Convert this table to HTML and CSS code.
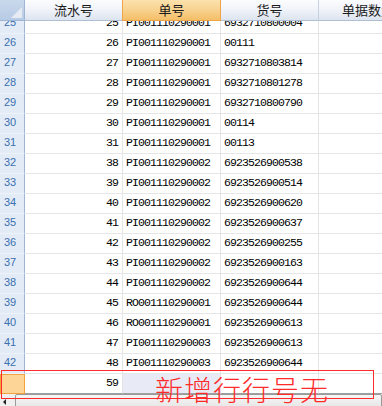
FILE: index.html
```html
<!DOCTYPE html>
<html>
<head>
<meta charset="utf-8">
<link rel="stylesheet" href="styles.css">
</head>
<body>
<div class="grid">
  <div class="row head">
    <div class="corner"><span class="tri"></span></div>
    <div class="hc">流水号</div>
    <div class="hc sel">单号</div>
    <div class="hc">货号</div>
    <div class="hc last">单据数量</div>
  </div>
  <div class="body">
    <div class="row first"><div class="rh">25</div><div class="c num">25</div><div class="c">PI001110290001</div><div class="c">6932710800004</div><div class="c"></div></div>
    <div class="row"><div class="rh">26</div><div class="c num">26</div><div class="c">PI001110290001</div><div class="c">00111</div><div class="c"></div></div>
    <div class="row"><div class="rh">27</div><div class="c num">27</div><div class="c">PI001110290001</div><div class="c">6932710803814</div><div class="c"></div></div>
    <div class="row"><div class="rh">28</div><div class="c num">28</div><div class="c">PI001110290001</div><div class="c">6932710801278</div><div class="c"></div></div>
    <div class="row"><div class="rh">29</div><div class="c num">29</div><div class="c">PI001110290001</div><div class="c">6932710800790</div><div class="c"></div></div>
    <div class="row"><div class="rh">30</div><div class="c num">30</div><div class="c">PI001110290001</div><div class="c">00114</div><div class="c"></div></div>
    <div class="row"><div class="rh">31</div><div class="c num">31</div><div class="c">PI001110290001</div><div class="c">00113</div><div class="c"></div></div>
    <div class="row"><div class="rh">32</div><div class="c num">38</div><div class="c">PI001110290002</div><div class="c">6923526900538</div><div class="c"></div></div>
    <div class="row"><div class="rh">33</div><div class="c num">39</div><div class="c">PI001110290002</div><div class="c">6923526900514</div><div class="c"></div></div>
    <div class="row"><div class="rh">34</div><div class="c num">40</div><div class="c">PI001110290002</div><div class="c">6923526900620</div><div class="c"></div></div>
    <div class="row"><div class="rh">35</div><div class="c num">41</div><div class="c">PI001110290002</div><div class="c">6923526900637</div><div class="c"></div></div>
    <div class="row"><div class="rh">36</div><div class="c num">42</div><div class="c">PI001110290002</div><div class="c">6923526900255</div><div class="c"></div></div>
    <div class="row"><div class="rh">37</div><div class="c num">43</div><div class="c">PI001110290002</div><div class="c">6923526900163</div><div class="c"></div></div>
    <div class="row"><div class="rh">38</div><div class="c num">44</div><div class="c">PI001110290002</div><div class="c">6923526900644</div><div class="c"></div></div>
    <div class="row"><div class="rh">39</div><div class="c num">45</div><div class="c">RO001110290001</div><div class="c">6923526900644</div><div class="c"></div></div>
    <div class="row"><div class="rh">40</div><div class="c num">46</div><div class="c">RO001110290001</div><div class="c">6923526900613</div><div class="c"></div></div>
    <div class="row"><div class="rh">41</div><div class="c num">47</div><div class="c">PI001110290003</div><div class="c">6923526900613</div><div class="c"></div></div>
    <div class="row"><div class="rh">42</div><div class="c num">48</div><div class="c">PI001110290003</div><div class="c">6923526900644</div><div class="c"></div></div>
  </div>
  <div class="row newrow"><div class="rh cur"></div><div class="c num">59</div><div class="c focus"></div><div class="c"></div><div class="c"></div></div>
  <div class="hscroll">
    <div class="arrow"></div>
    <div class="thumb"></div>
  </div>
  <div class="mark"></div>
  <div class="note">新增行行号无</div>
</div>
</body>
</html>
```

FILE: styles.css
```css
html, body {
  margin: 0;
  padding: 0;
  background: #ffffff;
}
.grid {
  position: relative;
  width: 382px;
  height: 406px;
  overflow: hidden;
  background: #ffffff;
}
.row {
  display: flex;
  height: 20px;
  width: 417px;
}
.row > div {
  flex: 0 0 98px;
  box-sizing: border-box;
}
.row > .rh,
.row > .corner {
  flex: 0 0 25px;
}
.head {
  height: 21px;
}
.corner {
  position: relative;
  background: linear-gradient(#c9d8ec, #b7cbe5);
  border-right: 1px solid #9eb6d4;
  border-bottom: 1px solid #9eb6d4;
}
.tri {
  position: absolute;
  right: 2px;
  bottom: 2px;
  width: 0;
  height: 0;
  border-left: 11px solid transparent;
  border-bottom: 11px solid #e6ebf3;
}
.hc {
  background: linear-gradient(#fbfcfe 0%, #f1f4f9 45%, #dde4ef 100%);
  border-right: 1px solid #c5d2e4;
  border-bottom: 1px solid #aebfd6;
  font-family: "Noto Sans CJK SC", sans-serif;
  font-size: 13px;
  line-height: 19px;
  color: #1a1a1a;
  text-align: center;
  white-space: nowrap;
}
.hc.last {
  text-align: left;
  padding-left: 23px;
  overflow: hidden;
}
.row > .hc.sel {
  background: linear-gradient(#fbe2ad 0%, #f8d28f 50%, #f4be67 100%);
  border-left: 1px solid #f0a448;
  border-right: 1px solid #f0a448;
  border-bottom: 1px solid #f0a448;
  margin-left: -1px;
  flex-basis: 99px;
}
.body {
  height: 353px;
  overflow: hidden;
}
.first {
  margin-top: -7px;
}
.rh {
  background: #e3ebf6;
  border-right: 1px solid #9eb6d4;
  border-bottom: 1px solid #eef3f9;
  font-family: "Liberation Sans", sans-serif;
  font-size: 11px;
  line-height: 17px;
  color: #3a70b0;
  padding-left: 4px;
}
.c {
  border-right: 1px solid #e4e4e4;
  border-bottom: 1px solid #e6e6e6;
  font-family: "Liberation Mono", monospace;
  font-size: 11.5px;
  letter-spacing: -0.9px;
  line-height: 17px;
  color: #000000;
  padding-left: 3px;
  white-space: nowrap;
  overflow: hidden;
}
.c.num {
  text-align: right;
  padding-left: 0;
  padding-right: 4px;
}
.newrow .rh.cur {
  background: #fdd596;
  border: 1px solid #f3a23e;
}
.newrow .c {
  border-bottom: 1px solid #a0a0a0;
}
.c.focus {
  background: #e8eaf5;
}
.hscroll {
  display: flex;
  align-items: flex-start;
  height: 12px;
  background: #f0f0f0;
}
.arrow {
  width: 0;
  height: 0;
  margin: 5px 0 0 3px;
  border-top: 3px solid transparent;
  border-bottom: 3px solid transparent;
  border-right: 3px solid #222222;
}
.thumb {
  flex: 1;
  margin-left: 9px;
  height: 14px;
  border: 1px solid #9a9a9a;
  border-radius: 2px;
  background: linear-gradient(#f6f6f6, #e4e4e4);
}
.mark {
  position: absolute;
  left: 1px;
  top: 370px;
  width: 371px;
  height: 27px;
  border: 1px solid #ff2a2a;
}
.note {
  position: absolute;
  left: 155px;
  top: 372px;
  font-family: "Noto Sans CJK SC", sans-serif;
  font-weight: 300;
  font-size: 28px;
  line-height: 34px;
  letter-spacing: 1px;
  color: #ff2a2a;
  white-space: nowrap;
}
```
